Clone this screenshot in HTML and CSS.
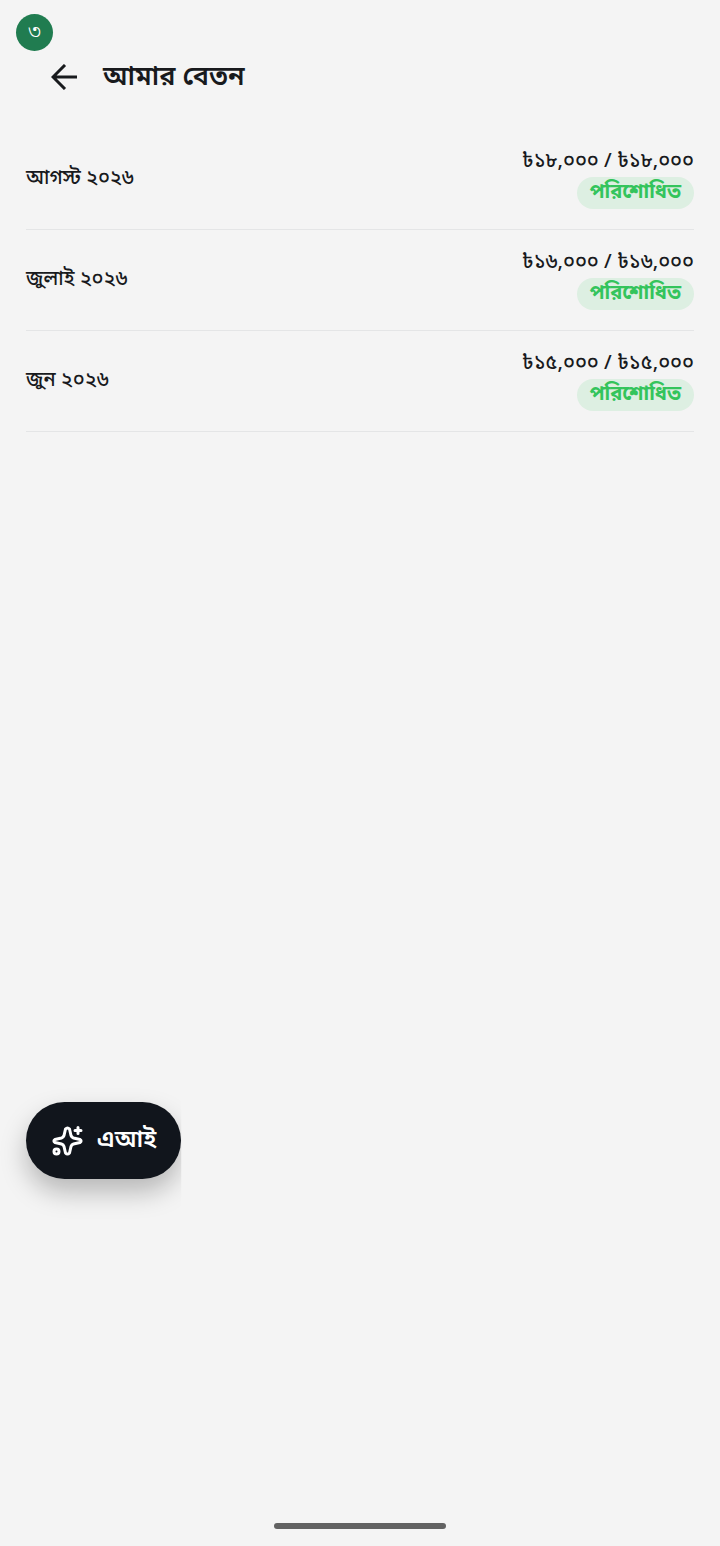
FILE: index.html
```html
<!DOCTYPE html>
<html lang="bn">
<head>
    <meta charset="UTF-8">
    <meta name="viewport" content="width=device-width, initial-scale=1">
    <title>আমার বেতন</title>
    <link rel="stylesheet" href="styles.css">
</head>
<body>
<span class="step-badge">৩</span>

<header class="app-bar">
    <button class="back-button" type="button" aria-label="ফিরে যান">
        <svg viewBox="0 0 26 26" width="26" height="26">
            <path d="M26 13H3M14 1L2 13l12 12"/>
        </svg>
    </button>
    <h1 class="title">আমার বেতন</h1>
</header>

<main class="content">
    <ul class="salary-list">
        <li class="salary-row">
            <span class="month">আগস্ট ২০২৬</span>
            <div class="payment">
                <span class="amount">৳১৮,০০০ / ৳১৮,০০০</span>
                <span class="status">পরিশোধিত</span>
            </div>
        </li>
        <li class="salary-row">
            <span class="month">জুলাই ২০২৬</span>
            <div class="payment">
                <span class="amount">৳১৬,০০০ / ৳১৬,০০০</span>
                <span class="status">পরিশোধিত</span>
            </div>
        </li>
        <li class="salary-row">
            <span class="month">জুন ২০২৬</span>
            <div class="payment">
                <span class="amount">৳১৫,০০০ / ৳১৫,০০০</span>
                <span class="status">পরিশোধিত</span>
            </div>
        </li>
    </ul>
</main>

<div class="ai-wrapper">
    <button class="ai-button" type="button">
        <svg viewBox="0 0 32 32" width="32" height="32">
            <path d="M14.500 4Q16.500 1.800 18.500 4L20 10.500Q20.600 12.400 22.500 13L29 14.500Q31.200 16 29 17.500L22.500 19Q20.600 19.600 20 21.500L18.500 28Q16.500 30.200 14.500 28L13 21.500Q12.400 19.600 10.500 19L4 17.500Q1.800 16 4 14.500L10.500 13Q12.400 12.400 13 10.500z"/>
            <path d="M27 2.500v6M24 5.500h6"/>
            <circle cx="5.500" cy="26.500" r="2.500"/>
        </svg>
        <span class="ai-label">এআই</span>
    </button>
</div>

<div class="home-indicator"></div>
</body>
</html>
```

FILE: styles.css
```css
* {
    box-sizing: border-box;
}

body {
    display: flex;
    flex-direction: column;
    min-height: 100vh;
    margin: 0;
    color: #181a1d;
    background: #f4f4f4;
    font-family: "Noto Sans", "Noto Sans Bengali", sans-serif;
}

button {
    border: none;
    padding: 0;
    color: inherit;
    background: none;
    font-family: inherit;
    cursor: pointer;
}

svg {
    fill: none;
    stroke: currentColor;
    stroke-width: 3;
    stroke-linecap: round;
    stroke-linejoin: round;
}

.step-badge {
    position: absolute;
    top: 14px;
    left: 16px;
    width: 37px;
    height: 37px;
    border-radius: 50%;
    color: white;
    background: #207c50;
    font-size: 22px;
    font-weight: 300;
    line-height: 32px;
    text-align: center;
}

.app-bar {
    display: flex;
    align-items: center;
    gap: 26px;
    padding: 51px 51px 0;
}

.back-button {
    display: flex;
}

.back-button svg {
    stroke-linecap: butt;
    stroke-linejoin: miter;
}

.title {
    margin: 0;
    padding-bottom: 4px;
    font-size: 27px;
    font-weight: 600;
    line-height: 48px;
}

.content {
    flex: 1;
    padding: 26px;
}

.salary-list {
    margin: 0;
    padding: 0;
    list-style: none;
}

.salary-row {
    display: flex;
    align-items: center;
    justify-content: space-between;
    padding: 16px 0 20px;
    border-bottom: 1px solid #e4e5e6;
    font-size: 20px;
    font-weight: 500;
}

.payment {
    display: flex;
    flex-direction: column;
    align-items: flex-end;
    gap: 3px;
}

.amount {
    line-height: 29px;
}

.status {
    padding: 0 13px 4px;
    border-radius: 16px;
    color: #34c45c;
    background: #ddefe2;
    font-weight: 700;
    line-height: 28px;
}

.ai-wrapper {
    padding: 0 26px 324px;
}

.ai-button {
    display: flex;
    align-items: center;
    gap: 14px;
    height: 77px;
    padding: 0 25px;
    border-radius: 39px;
    color: white;
    background: #11151c;
    box-shadow: 0 13px 26px rgba(0, 0, 0, .25);
    clip-path: inset(-40px 0 -50px -40px);
    font-size: 24px;
    font-weight: 600;
}

.ai-label {
    padding-bottom: 4px;
}

.home-indicator {
    align-self: center;
    width: 24%;
    height: 6px;
    margin: 20px 0 17px;
    border-radius: 3px;
    background: #626262;
}
```
